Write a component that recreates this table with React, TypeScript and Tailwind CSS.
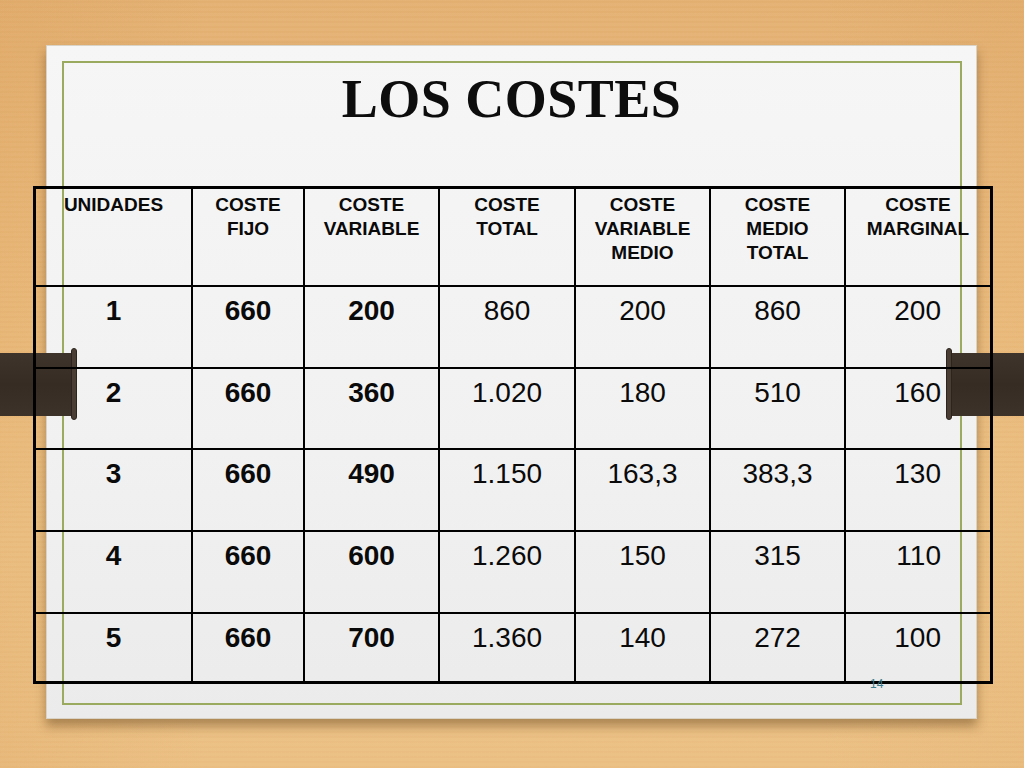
import React from "react";

const headers = [
  ["UNIDADES"],
  ["COSTE", "FIJO"],
  ["COSTE", "VARIABLE"],
  ["COSTE", "TOTAL"],
  ["COSTE", "VARIABLE", "MEDIO"],
  ["COSTE", "MEDIO", "TOTAL"],
  ["COSTE", "MARGINAL"],
];

const rows = [
  ["1", "660", "200", "860", "200", "860", "200"],
  ["2", "660", "360", "1.020", "180", "510", "160"],
  ["3", "660", "490", "1.150", "163,3", "383,3", "130"],
  ["4", "660", "600", "1.260", "150", "315", "110"],
  ["5", "660", "700", "1.360", "140", "272", "100"],
];

function Clip({ side }: { side: "left" | "right" }) {
  if (side === "left") {
    return (
      <div className="absolute left-0 top-[348px] z-[5] flex h-[72px] items-center">
        <div className="h-[63px] w-[73px] bg-[linear-gradient(180deg,#3f342b_0%,#362c24_50%,#3d3229_100%)]" />
        <div className="-ml-[2px] h-[72px] w-[6px] rounded-full border border-[#2c241d] bg-[#4a3e34]" />
      </div>
    );
  }
  return (
    <div className="absolute right-0 top-[348px] z-[5] flex h-[72px] items-center">
      <div className="relative z-[1] -mr-[2px] h-[72px] w-[6px] rounded-full border border-[#2c241d] bg-[#4a3e34]" />
      <div className="h-[63px] w-[74px] bg-[linear-gradient(180deg,#3f342b_0%,#362c24_50%,#3d3229_100%)]" />
    </div>
  );
}

export default function App() {
  return (
    <div className="relative h-[768px] w-[1024px] overflow-hidden bg-[linear-gradient(180deg,#e4b173_0%,#ebbc7e_35%,#eec488_70%,#ecc084_100%)] pl-[46px] pt-[45px]">
      <div className="pointer-events-none absolute inset-0 bg-[repeating-linear-gradient(0deg,rgba(160,100,40,0.025)_0px,rgba(160,100,40,0.025)_2px,rgba(255,255,255,0.02)_2px,rgba(255,255,255,0.02)_5px)]" />
      <div className="pointer-events-none absolute inset-0 bg-[linear-gradient(90deg,rgba(200,130,50,0.12)_0%,rgba(255,255,255,0)_20%,rgba(255,255,255,0)_80%,rgba(200,130,50,0.08)_100%)]" />
      <div className="relative flex h-[674px] w-[931px] flex-col items-center border border-[#d9d2c6] bg-[linear-gradient(180deg,#f6f6f6_0%,#f1f1f1_60%,#ebebeb_100%)] shadow-[0_7px_10px_rgba(90,60,20,0.45)]">
        <div className="absolute bottom-[13px] left-[15px] right-[14px] top-[15px] border-2 border-[#9aaa5e]" />
        <h1 className="relative mt-[26px] font-['Liberation_Serif','Times_New_Roman',serif] text-[54px] font-bold leading-[54px] tracking-[0.5px] text-[#0d0d0d]">
          LOS COSTES
        </h1>
        <div className="relative z-10 -ml-[14px] mt-[60px] grid w-[960px] grid-cols-[157px_112px_135px_136px_135px_135px_144px] grid-rows-[98px_82px_81px_82px_82px_67px] self-start border-[3px] border-black font-['Liberation_Sans',Arial,sans-serif] text-[#0a0a0a]">
          {headers.map((h, i) => (
            <div
              key={"h" + i}
              className={`flex flex-col items-center border-b-2 border-black pt-[4px] text-[19px] font-bold leading-[24px] ${i < 6 ? "border-r-2" : ""}`}
            >
              {h.map((t) => (
                <span key={t}>{t}</span>
              ))}
            </div>
          ))}
          {rows.map((r, ri) =>
            r.map((v, ci) => (
              <div
                key={ri + "-" + ci}
                className={`border-black pt-[8px] text-[28px] leading-[32px] ${ci < 6 ? "border-r-2" : ""} ${ri < 4 ? "border-b-2" : ""} ${ci < 3 ? "font-bold" : "font-normal"} ${ci === 6 ? "pr-[49px] text-right" : "text-center"}`}
              >
                {v}
              </div>
            ))
          )}
        </div>
        <span className="absolute left-[823px] top-[632px] z-20 font-['Liberation_Sans',Arial,sans-serif] text-[12px] leading-[12px] text-[#3b7d8e]">
          14
        </span>
      </div>
      <Clip side="left" />
      <Clip side="right" />
    </div>
  );
}
